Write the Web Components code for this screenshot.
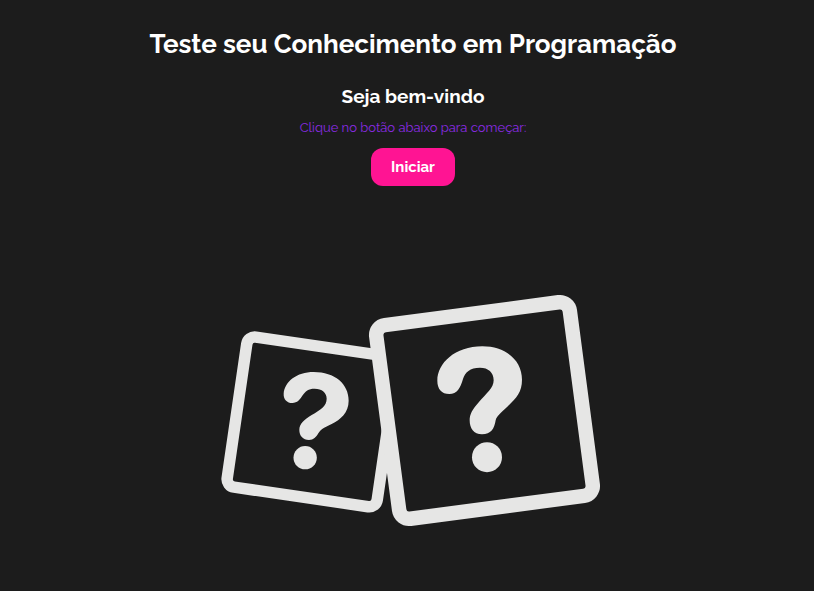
<!DOCTYPE html>
<html lang="pt-BR">
<head>
<meta charset="utf-8">
<meta name="viewport" content="width=device-width, initial-scale=1">
<title>Teste seu Conhecimento em Programação</title>
<style>
  body {
    margin: 0;
    background: #1c1c1c;
    color: #fff;
    font-family: Raleway, Lato, sans-serif;
  }
</style>
</head>
<body>
<quiz-page>
  <quiz-title slot="title">Teste seu Conhecimento em Programação</quiz-title>
  <quiz-welcome heading="Seja bem-vindo" action="Iniciar">Clique no botão abaixo para começar:</quiz-welcome>
  <quiz-cards></quiz-cards>
</quiz-page>

<script>
const define = (name, html, setup) => customElements.define(name, class extends HTMLElement {
  constructor() {
    super();
    const template = document.createElement('template');
    template.innerHTML = html;
    this.attachShadow({ mode: 'open' }).append(template.content.cloneNode(true));
  }
  connectedCallback() {
    if (setup) setup(this, this.shadowRoot);
  }
});

define('quiz-page', `
  <style>
    :host { display: block; }
    main {
      display: flex;
      flex-direction: column;
      align-items: center;
      padding: 28px 0 64px 12px;
      text-align: center;
    }
  </style>
  <main><slot name="title"></slot><slot></slot></main>
`);

define('quiz-title', `
  <style>
    :host { display: block; }
    h1 { margin: 0; font-size: 26px; line-height: 32px; font-weight: 700; }
  </style>
  <h1><slot></slot></h1>
`);

define('quiz-welcome', `
  <style>
    :host { display: flex; flex-direction: column; align-items: center; margin-top: 24px; }
    h2 { margin: 0; font-size: 19px; line-height: 24px; font-weight: 700; }
    p { margin: 12px 0; font-size: 13px; line-height: 16px; color: #8a2be2; }
    button {
      padding: 8px 20px;
      border: 0;
      border-radius: 12px;
      background: #ff1493;
      color: #fff;
      font: inherit;
      font-size: 15px;
      line-height: 22px;
      font-weight: 700;
      cursor: pointer;
    }
  </style>
  <h2></h2>
  <p><slot></slot></p>
  <button type="button"></button>
`, (host, root) => {
  root.querySelector('h2').textContent = host.getAttribute('heading');
  root.querySelector('button').textContent = host.getAttribute('action');
});

define('quiz-cards', `
  <style>
    :host { display: block; width: min(100%, 380px); margin-top: 108px; }
    svg { display: block; width: 100%; height: auto; overflow: visible; }
    rect { stroke: #e6e6e5; fill: #1c1c1c; }
    path, circle { fill: #e6e6e5; }
  </style>
  <svg viewBox="223 294 380 233" aria-hidden="true">
    <rect x="236.2" y="346.1" width="151.6" height="151.6" rx="8" stroke-width="11.5" transform="rotate(8.3 312 421.9)"/>
    <g transform="translate(270 360) scale(.3333)">
      <path d="M41 101C44 65 80 36 131 36C195 36 236 72 236 122C236 158 212 178 185 192C158 205 153 208 145 220C138 232 131 240 117 240C99 240 88 227 88 210C88 191 102 179 125 165C152 149 170 138 170 116C170 98 156 86 134 86C115 86 106 94 98 106C90 119 82 129 67 129C51 129 40 118 41 101Z"/>
      <circle cx="105.5" cy="293" r="35"/>
    </g>
    <rect x="386.9" y="312.9" width="195.2" height="195.2" rx="10" stroke-width="14.5" transform="rotate(-7.5 484.5 410.5)"/>
    <g transform="translate(425 335) scale(.3333)">
      <path d="M37 137C37 85 90 34 172 34C245 34 291 78 291 134C291 170 275 188 250 212C225 236 215 243 212 256C208 282 198 298 171 298C146 298 134 280 134 256C134 238 142 223 160 203C185 174 206 160 206 136C206 112 190 98 165 98C135 98 120 112 114 132C106 160 96 177 73 177C50 177 37 162 37 137Z"/>
      <circle cx="186" cy="366.5" r="45"/>
    </g>
  </svg>
`);
</script>
</body>
</html>
